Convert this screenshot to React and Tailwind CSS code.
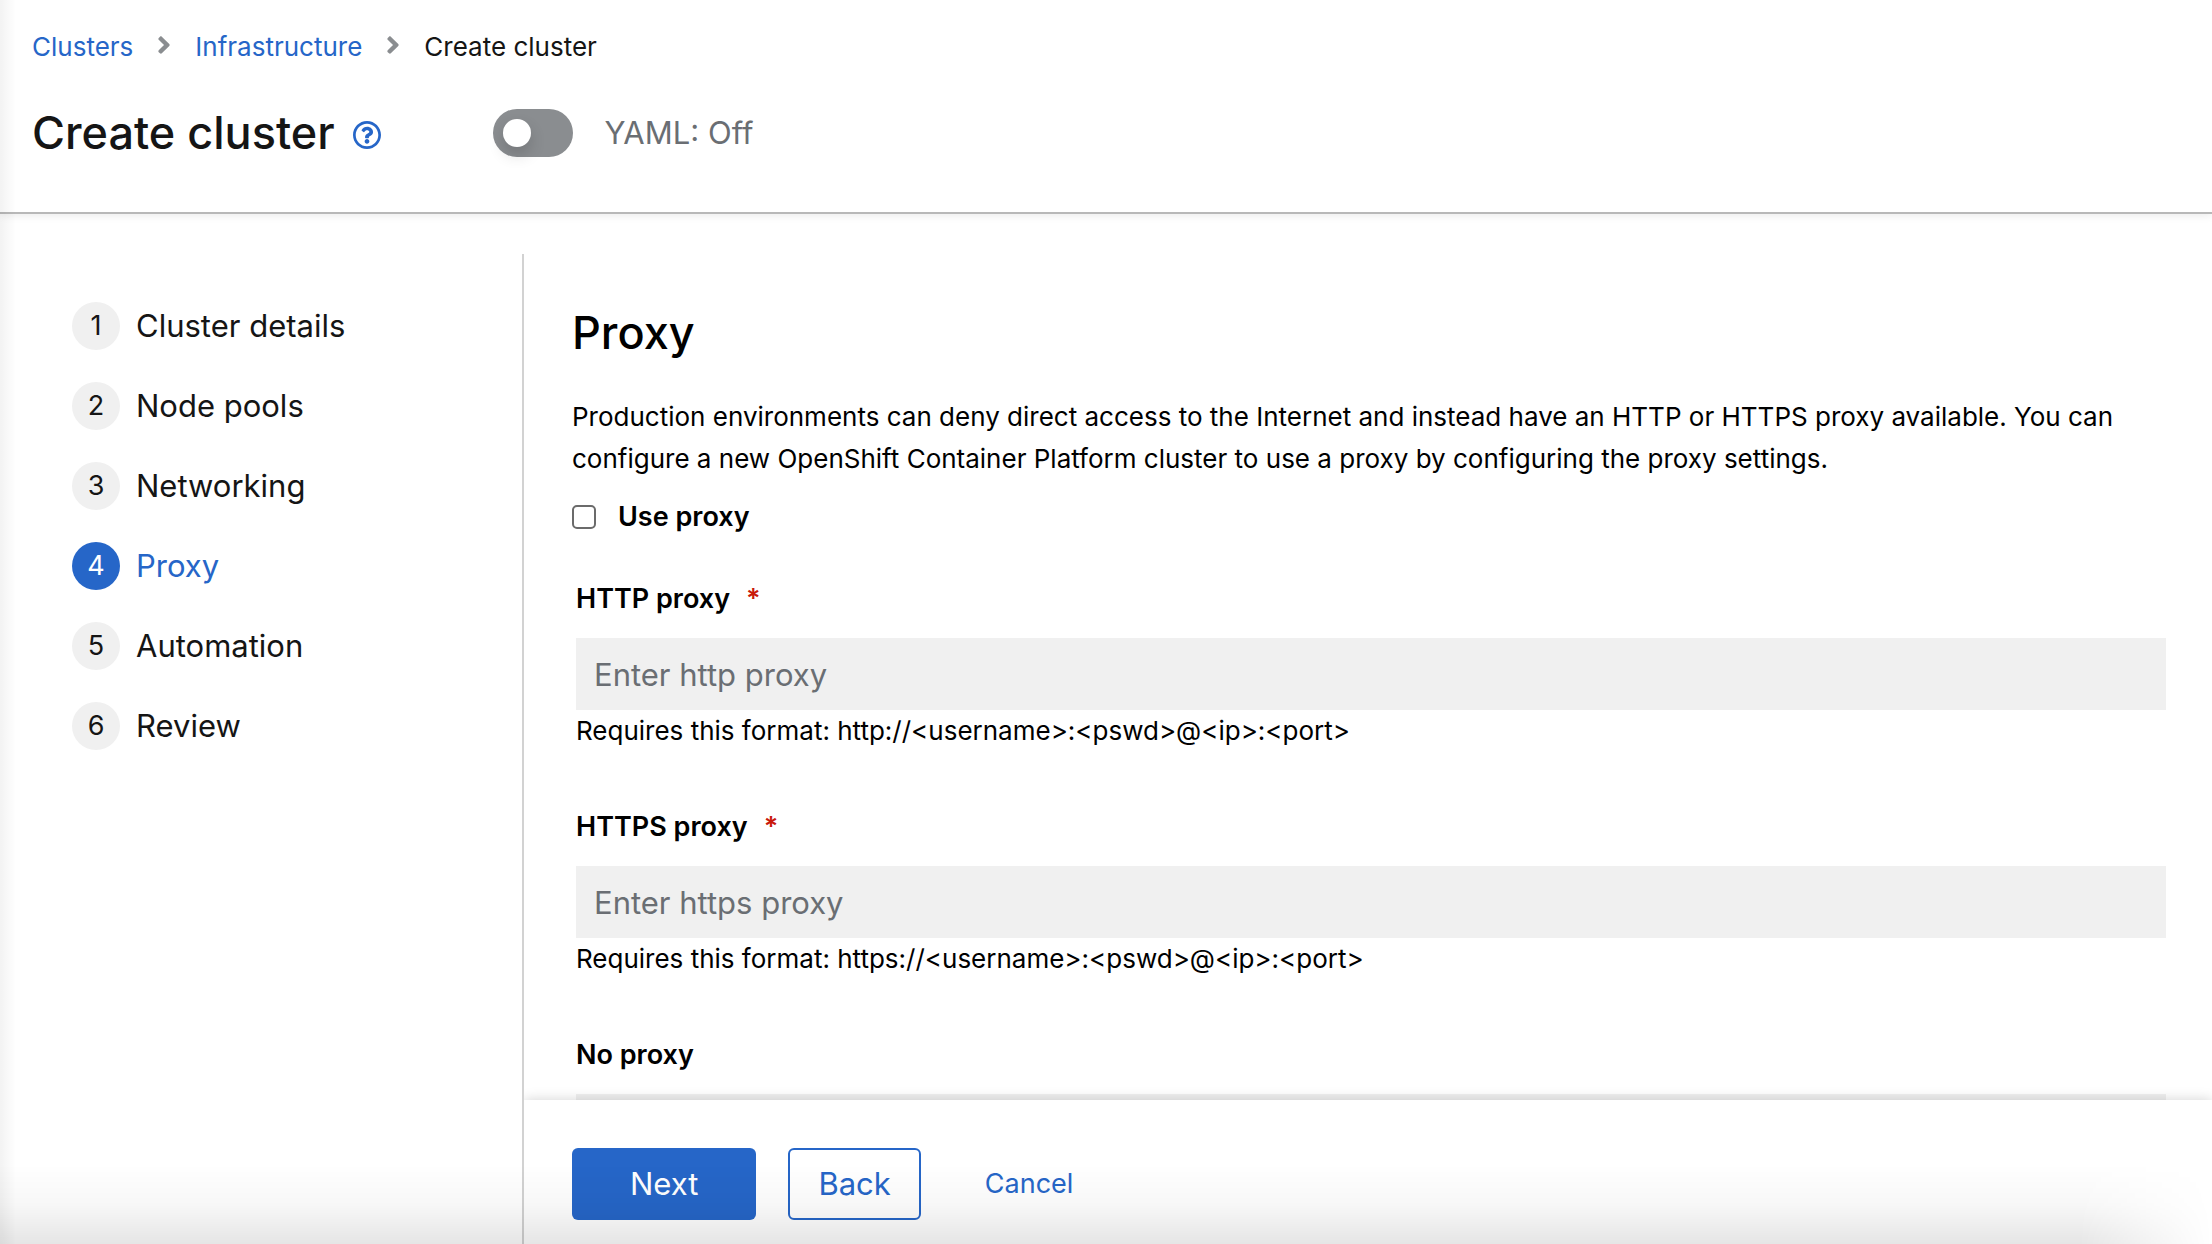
import React, { useState } from "react";

const STEPS = ["Cluster details", "Node pools", "Networking", "Proxy", "Automation", "Review"];

function Chevron() {
  return (
    <svg viewBox="0 0 256 512" className="-mt-1 h-7 w-3.5 text-[#8a8d90]" fill="currentColor" aria-hidden="true">
      <path d="M224.3 273l-136 136c-9.4 9.4-24.6 9.4-33.9 0l-22.600-22.600c-9.4-9.4-9.4-24.600 0-33.900l96.400-96.400-96.400-96.400c-9.4-9.4-9.4-24.600 0-33.900L54.300 103c9.4-9.4 24.600-9.4 33.900 0l136 136c9.500 9.400 9.500 24.600.1 34z" />
    </svg>
  );
}

function HelpIcon() {
  return (
    <svg viewBox="8 8 496 496" className="size-7" fill="currentColor" aria-hidden="true">
      <path d="M256 8C119.043 8 8 119.083 8 256c0 136.997 111.043 248 248 248s248-111.003 248-248C504 119.083 392.957 8 256 8zm0 448c-110.532 0-200-89.431-200-200 0-110.495 89.472-200 200-200 110.491 0 200 89.471 200 200 0 110.530-89.431 200-200 200zm107.244-255.200c0 67.052-72.421 68.084-72.421 92.863V300c0 6.627-5.373 12-12 12h-45.647c-6.627 0-12-5.373-12-12v-8.659c0-35.745 27.100-50.034 47.579-61.516 17.561-9.845 28.324-16.541 28.324-29.579 0-17.246-21.999-28.693-39.784-28.693-23.189 0-33.894 10.977-48.942 29.969-4.057 5.120-11.460 6.071-16.666 2.124l-27.824-21.098c-5.107-3.872-6.251-11.066-2.644-16.363C184.846 131.491 214.940 112 261.794 112c49.071 0 101.450 38.304 101.450 88.800zM298 368c0 23.159-18.841 42-42 42s-42-18.841-42-42 18.841-42 42-42 42 18.841 42 42z" />
    </svg>
  );
}

function Field({ id, label, required, placeholder, helper }) {
  return (
    <div className="flex flex-col">
      <label htmlFor={id} className="mb-[18px] text-[27px] leading-[42px] font-semibold">
        {label}
        {required && <span className="ml-4 text-[#c9190b]" aria-hidden="true">*</span>}
      </label>
      <input
        id={id}
        type="text"
        disabled
        placeholder={placeholder}
        className="h-18 w-full bg-[#f0f0f0] px-[18px] text-[31px] placeholder:text-[#6a6e73] placeholder:opacity-100"
      />
      {helper && <p className="text-[26px] leading-[42px]">{helper}</p>}
    </div>
  );
}

export default function App() {
  const [yaml, setYaml] = useState(false);
  const [useProxy, setUseProxy] = useState(false);

  return (
    <div className="relative flex h-screen flex-col overflow-hidden bg-white font-['Inter',sans-serif] text-black">
      <header className="relative z-10 border-b-2 border-[#b8b8b8] px-8 pt-[26px] pb-12 text-[#151515] shadow-[0_2px_8px_rgba(0,0,0,0.08)]">
        <nav aria-label="Breadcrumb">
          <ol className="flex items-center gap-6 text-[26px] leading-[42px]">
            <li><a href="#clusters" className="text-[#2666c8]">Clusters</a></li>
            <li aria-hidden="true"><Chevron /></li>
            <li><a href="#infrastructure" className="text-[#2666c8]">Infrastructure</a></li>
            <li aria-hidden="true"><Chevron /></li>
            <li aria-current="page">Create cluster</li>
          </ol>
        </nav>
        <div className="mt-[34px] flex items-center">
          <h1 className="text-[45px] leading-[62px] font-medium">Create cluster</h1>
          <button type="button" aria-label="More information" className="mt-1 ml-[18px] text-[#2666c8]">
            <HelpIcon />
          </button>
          <label className="ml-28 flex items-center gap-8 text-[31px] text-[#6a6e73]">
            <input type="checkbox" role="switch" className="peer sr-only" checked={yaml} onChange={() => setYaml(!yaml)} />
            <span className="flex h-12 w-20 items-center rounded-full bg-[#8a8d90] p-2.5 peer-checked:justify-end peer-checked:bg-[#2666c8]">
              <span className="size-7 rounded-full bg-white shadow-[0_8px_16px_rgba(0,0,0,0.16)]" />
            </span>
            {yaml ? "YAML: On" : "YAML: Off"}
          </label>
        </div>
      </header>

      <div className="flex min-h-0 flex-1 pt-10">
        <nav aria-label="Wizard steps" className="w-[524px] shrink-0 border-r-2 border-[#d2d2d2] px-18 pt-12">
          <ol className="flex flex-col gap-8">
            {STEPS.map((step, i) => (
              <li key={step}>
                <button
                  type="button"
                  className={
                    step === "Proxy"
                      ? "flex h-12 items-center gap-4 text-[31px] text-[#2666c8]"
                      : "flex h-12 items-center gap-4 text-[31px] text-[#151515]"
                  }
                >
                  <span
                    className={
                      step === "Proxy"
                        ? "flex size-12 items-center justify-center rounded-full bg-[#2666c8] text-[27px] text-white"
                        : "flex size-12 items-center justify-center rounded-full bg-[#f0f0f0] text-[27px]"
                    }
                  >
                    {i + 1}
                  </span>
                  {step}
                </button>
              </li>
            ))}
          </ol>
        </nav>

        <div className="flex min-w-0 flex-1 flex-col overflow-hidden">
          <main className="min-h-0 flex-1 overflow-hidden pt-12 pr-[46px] pl-12">
            <h2 className="text-[45px] leading-[62px] font-medium">Proxy</h2>
            <p className="mt-8 text-[26px] leading-[42px]">
              Production environments can deny direct access to the Internet and instead have an HTTP or HTTPS proxy
              available. You can configure a new OpenShift Container Platform cluster to use a proxy by configuring the
              proxy settings.
            </p>
            <label className="mt-4 flex items-center gap-[22px] text-[27px] leading-[42px] font-semibold">
              <input
                type="checkbox"
                checked={useProxy}
                onChange={() => setUseProxy(!useProxy)}
                className="size-6 appearance-none rounded-[5px] border-2 border-[#6b6b6b] bg-white checked:bg-[#2666c8]"
              />
              Use proxy
            </label>
            <div className="mt-10 flex flex-col gap-[54px] pl-1">
              <Field
                id="http-proxy"
                label="HTTP proxy"
                required
                placeholder="Enter http proxy"
                helper="Requires this format: http://<username>:<pswd>@<ip>:<port>"
              />
              <Field
                id="https-proxy"
                label="HTTPS proxy"
                required
                placeholder="Enter https proxy"
                helper="Requires this format: https://<username>:<pswd>@<ip>:<port>"
              />
              <Field id="no-proxy" label="No proxy" />
            </div>
          </main>
          <footer className="relative flex items-center gap-8 bg-white px-12 pt-12 pb-6 shadow-[0_0_12px_rgba(0,0,0,0.18)]">
            <button type="button" className="h-18 rounded-md bg-[#2666c8] px-[58px] text-[31px] text-white">Next</button>
            <button type="button" className="h-18 rounded-md border-2 border-[#2666c8] px-7 text-[31px] text-[#2666c8]">Back</button>
            <button type="button" className="h-18 px-8 text-[27px] text-[#2666c8]">Cancel</button>
          </footer>
        </div>
      </div>

      <div className="pointer-events-none absolute inset-y-0 left-0 z-20 w-4 bg-linear-to-r from-black/5 to-transparent" />
      <div className="pointer-events-none absolute inset-x-0 bottom-0 z-20 h-20 bg-linear-to-t from-black/10 via-black/3 to-transparent mask-[linear-gradient(to_right,black_94%,transparent)]" />
    </div>
  );
}
